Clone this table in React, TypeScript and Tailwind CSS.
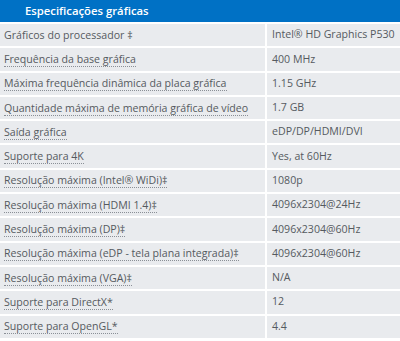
const ROWS: [string, string][] = [
  ['Gráficos do processador ‡', 'Intel® HD Graphics P530'],
  ['Frequência da base gráfica', '400 MHz'],
  ['Máxima frequência dinâmica da placa gráfica', '1.15 GHz'],
  ['Quantidade máxima de memória gráfica de vídeo', '1.7 GB'],
  ['Saída gráfica', 'eDP/DP/HDMI/DVI'],
  ['Suporte para 4K', 'Yes, at 60Hz'],
  ['Resolução máxima (Intel® WiDi)‡', '1080p'],
  ['Resolução máxima (HDMI 1.4)‡', '4096x2304@24Hz'],
  ['Resolução máxima (DP)‡', '4096x2304@60Hz'],
  ['Resolução máxima (eDP - tela plana integrada)‡', '4096x2304@60Hz'],
  ['Resolução máxima (VGA)‡', 'N/A'],
  ['Suporte para DirectX*', '12'],
  ['Suporte para OpenGL*', '4.4'],
]

function SpecRow({ label, value }: { label: string; value: string }) {
  const dotted = label !== 'Gráficos do processador ‡'
  return (
    <div className="grid grid-cols-[265px_1fr] gap-x-[2px] border-b-2 border-white">
      <div className="h-[22.3px] bg-[#e9ebee] pl-1 flex items-center whitespace-nowrap">
        <span
          className={
            dotted
              ? 'leading-[14px] border-b border-dotted border-[#8a8f96]'
              : 'leading-[14px]'
          }
        >
          {label}
        </span>
      </div>
      <div className="h-[22.3px] bg-[#e9ebee] pl-[5px] flex items-center whitespace-nowrap">
        {value}
      </div>
    </div>
  )
}

export default function App() {
  return (
    <div className="w-[400px] h-[341px] bg-white overflow-hidden font-['Open_Sans',sans-serif] text-[10.6px] text-[#555a60]">
      <div className="h-[22px] bg-[#0071c5] flex items-center pl-[25px] border-b-2 border-white box-content">
        <h3 className="text-white text-[11.3px] font-semibold">Especificações gráficas</h3>
      </div>
      {ROWS.map(([label, value]) => (
        <SpecRow key={label} label={label} value={value} />
      ))}
    </div>
  )
}
